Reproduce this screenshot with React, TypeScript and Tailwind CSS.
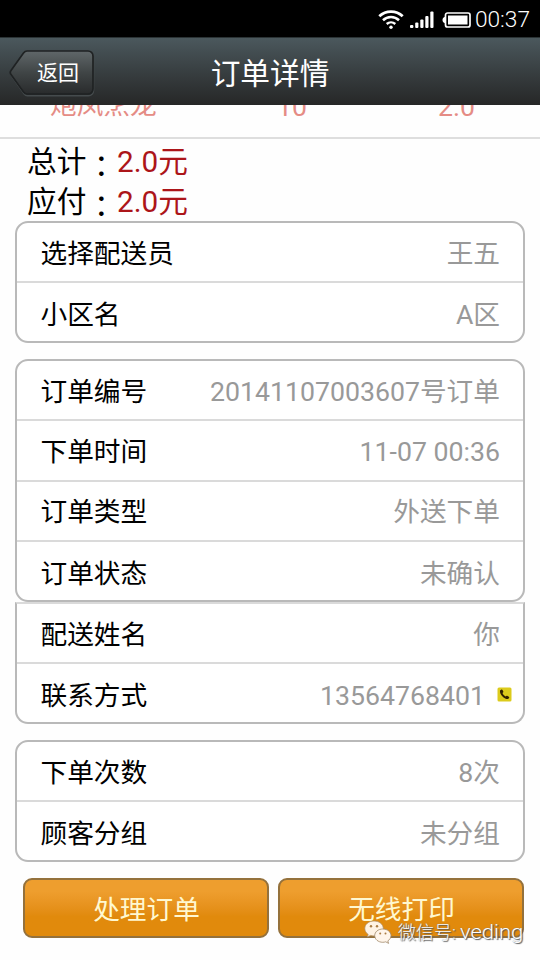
import type { ReactNode } from "react";
import clsx from "clsx";

interface Row {
  label: string;
  value: string;
  phone?: boolean;
}

const deliveryRows: Row[] = [
  { label: "选择配送员", value: "王五" },
  { label: "小区名", value: "A区" },
];

const orderRows: Row[] = [
  { label: "订单编号", value: "20141107003607号订单" },
  { label: "下单时间", value: "11-07 00:36" },
  { label: "订单类型", value: "外送下单" },
  { label: "订单状态", value: "未确认" },
];

const contactRows: Row[] = [
  { label: "配送姓名", value: "你" },
  { label: "联系方式", value: "13564768401", phone: true },
];

const customerRows: Row[] = [
  { label: "下单次数", value: "8次" },
  { label: "顾客分组", value: "未分组" },
];

function StatusBar() {
  return (
    <div className="flex h-[37px] shrink-0 items-center justify-end bg-black pr-[10px] text-white">
      <svg className="mt-0.5 h-5 w-[26px]" viewBox="0 0 26 20" fill="none" stroke="#fff">
        <path d="M1.3 6.2a17 17 0 0 1 23.4 0" strokeWidth="2.8" />
        <path d="M5 10.2a11.7 11.7 0 0 1 16 0" strokeWidth="2.6" />
        <path d="M8.7 14a6.5 6.5 0 0 1 8.6 0" strokeWidth="2.4" />
        <circle cx="13" cy="17.2" r="1.7" fill="#fff" stroke="none" />
      </svg>
      <svg className="ml-[6px] mt-[3px] h-[18px] w-6" viewBox="0 0 24 18" fill="#fff">
        <rect x="0" y="14" width="3.4" height="3" rx="1" />
        <rect x="5.2" y="11.5" width="3.2" height="5.5" rx="1" />
        <rect x="10.3" y="8.5" width="3.2" height="8.5" rx="1" />
        <rect x="15.3" y="5" width="3.2" height="12" rx="1" />
        <rect x="20.3" y="0.5" width="3.2" height="16.5" rx="1" />
      </svg>
      <svg className="ml-2 mt-[3px] h-4 w-[29px]" viewBox="0 0 29 16" fill="none">
        <path d="M5.5 1h20.5a2 2 0 0 1 2 2v10a2 2 0 0 1-2 2H5.5a2 2 0 0 1-2-2V3a2 2 0 0 1 2-2z" stroke="#fff" strokeWidth="1.7" />
        <path d="M3.5 4.5C1 5.5 0.5 6.5 0.5 8s0.5 2.5 3 3.5z" fill="#fff" />
        <rect x="6" y="3.5" width="19.5" height="9" fill="#fff" />
      </svg>
      <span className="ml-1 mt-[3px] text-[22.7px] font-light leading-none">00:37</span>
    </div>
  );
}

function Header() {
  return (
    <header className="relative flex h-[68px] shrink-0 items-center justify-center border-t border-[#2b3335] bg-linear-to-b from-[#4b585d] to-[#262727] pt-1 text-white">
      <button className="absolute left-[9px] top-[11px] h-[48px] w-[86px]">
        <svg className="absolute inset-0" width="86" height="48" viewBox="0 0 86 48">
          <defs>
            <linearGradient id="back" x1="0" y1="0" x2="0" y2="1">
              <stop offset="0" stopColor="#606769" />
              <stop offset="0.5" stopColor="#404546" />
              <stop offset="1" stopColor="#292b2c" />
            </linearGradient>
          </defs>
          <path
            d="M18 2h61a5 5 0 0 1 5 5v34a5 5 0 0 1-5 5H18q-2 0-3.5-2L2 26q-1.5-2 0-4L14.5 4Q16 2 18 2z"
            fill="none"
            stroke="#454b4d"
            strokeWidth="1.5"
            transform="translate(0.5 0.7)"
          />
          <path
            d="M18 2h61a5 5 0 0 1 5 5v33a5 5 0 0 1-5 5H18q-2 0-3.5-2L2 25.5q-1.5-2 0-4L14.5 4Q16 2 18 2z"
            fill="url(#back)"
            stroke="#1f2223"
            strokeWidth="1.7"
          />
        </svg>
        <span className="relative flex h-full items-center justify-center pl-[12px] pt-px text-[21px]">返回</span>
      </button>
      <h1 className="text-[29.7px] leading-none">订单详情</h1>
    </header>
  );
}

function Summary({ label, value }: { label: string; value: string }) {
  return (
    <div className="flex h-10 items-center text-[29.7px] leading-none">
      <span className="flex w-[90px] pt-0.5">
        {label}
        <span className="pt-[3px] font-['Noto_Sans_CJK_TC']">：</span>
      </span>
      <span className="text-[#ac1519]">{value}</span>
    </div>
  );
}

function PhoneIcon() {
  return (
    <svg className="absolute right-[11px] top-[23px] h-[15px] w-[15px]" viewBox="0 0 15 15">
      <rect x="0.5" y="0.5" width="14" height="14" rx="1.5" fill="#dccb1c" />
      <path
        d="M3 3.4 4.5 2.5c.5-.2.8 0 1 .4l.8 1.6c.2.5 0 .8-.8 1.4.5 1.5 1.7 2.8 3.2 3.5.6-.7 1-.9 1.5-.6l1.6 1c.5.3.5.7.2 1.1l-.9 1C8.5 13 2.2 7.5 3 3.4z"
        fill="#302000"
      />
    </svg>
  );
}

function Card({ rows, className }: { rows: Row[]; className: string }) {
  return (
    <section className={clsx("mx-[15px] flex shrink-0 flex-col border-2 border-[#b9b9b9] bg-white", className)}>
      {rows.map((row, i) => (
        <div
          key={row.label}
          className={clsx(
            "relative flex items-center justify-between pl-[23.5px] text-[26.7px] leading-none",
            row.phone ? "pr-[38px]" : "pr-[23px]",
            i < rows.length - 1 ? "h-[60.3px] shrink-0 border-b-2 border-[#dadada] pt-1" : "flex-1 pt-[7px]"
          )}
        >
          <span>{row.label}</span>
          <span className="text-[#999]">{row.value}</span>
          {row.phone && <PhoneIcon />}
        </div>
      ))}
    </section>
  );
}

function ActionButton({ children }: { children: ReactNode }) {
  return (
    <button className="flex h-[60px] w-[246px] items-center justify-center rounded-[9px] border-2 border-[#94713c] bg-linear-to-b from-[#ee9e2e] from-20% to-[#e18a0c] to-65% pl-px pt-[5px] text-[26.7px] leading-none text-[#fff8d0]">
      {children}
    </button>
  );
}

function Watermark() {
  return (
    <div className="absolute left-[364px] top-[918px] flex items-center text-white">
      <svg className="mt-0.5 h-[26px] w-[28px]" viewBox="0 0 28 26">
        <path d="M10 1C4.8 1 .8 4.3.8 8.5c0 2.4 1.3 4.5 3.4 5.9L3.3 17l3.3-1.6c1.1.3 2.2.5 3.4.5 5.2 0 9.3-3.3 9.3-7.4S15.2 1 10 1z" fill="#fff3e4" stroke="#a98d68" strokeWidth="0.7" />
        <circle cx="7" cy="6.2" r="1.2" fill="#aa7c43" />
        <circle cx="13" cy="6.2" r="1.2" fill="#aa7c43" />
        <path d="M18.8 9c-4.6 0-8.1 2.9-8.1 6.6s3.5 6.7 8.1 6.7c1 0 2-.2 2.9-.5l2.9 1.6-.8-2.5c1.9-1.2 3.2-3.1 3.2-5.3 0-3.7-3.6-6.6-8.2-6.6z" fill="#fff5ea" stroke="#a08868" strokeWidth="0.8" />
        <circle cx="16.2" cy="13.6" r="1" fill="#aa7c43" />
        <circle cx="21.5" cy="13.6" r="1" fill="#aa7c43" />
      </svg>
      <span className="ml-[6px] whitespace-nowrap text-[18px] font-light leading-6 [text-shadow:1px_1px_1px_#555,0_0_1px_#777]">
        微信号: <span className="inline-block origin-left scale-x-110 text-[20px]">veding</span>
      </span>
    </div>
  );
}

export default function App() {
  return (
    <div className="relative flex h-[960px] w-[540px] flex-col overflow-hidden bg-[#fefefe] font-['Roboto','Noto_Sans_CJK_SC',sans-serif] text-black">
      <StatusBar />
      <Header />

      {/* last product row, scrolled under the header */}
      <div className="relative h-[34px] shrink-0 overflow-hidden border-b-2 border-[#dedede] text-[26.7px] leading-none text-[#e58c85]">
        <span className="absolute -top-[13px] left-[50px]">炮凤烹龙</span>
        <span className="absolute -top-[11px] left-[277px]">10</span>
        <span className="absolute -top-[11px] left-[438px]">2.0</span>
      </div>

      <div className="h-[82px] shrink-0 pl-[27px] pt-[3px]">
        <Summary label="总计" value="2.0元" />
        <Summary label="应付" value="2.0元" />
      </div>

      <Card rows={deliveryRows} className="h-[122px] rounded-[13px]" />
      <Card rows={orderRows} className="mt-4 h-[243px] rounded-[13px]" />
      <Card rows={contactRows} className="h-[122px] rounded-b-[13px] border-t-[#dadada]" />
      <Card rows={customerRows} className="mt-4 h-[122px] rounded-[13px]" />

      <div className="mt-4 flex shrink-0 gap-[9px] pl-[23px]">
        <ActionButton>处理订单</ActionButton>
        <ActionButton>无线打印</ActionButton>
      </div>

      <Watermark />
    </div>
  );
}
